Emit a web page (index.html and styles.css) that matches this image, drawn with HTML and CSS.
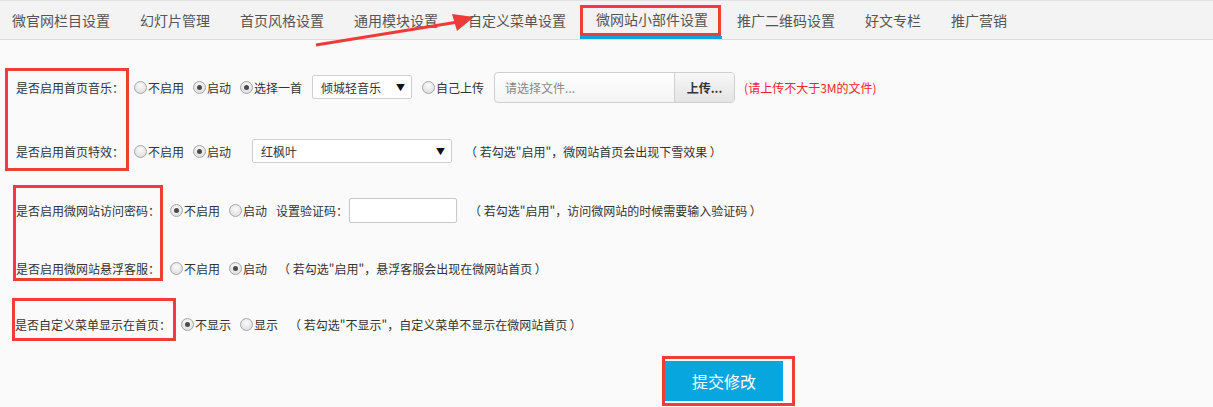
FILE: index.html
```html
<!DOCTYPE html>
<html lang="zh-CN">
<head>
    <meta charset="UTF-8">
    <meta name="viewport" content="width=device-width, initial-scale=1.0">
    <title>微网站小部件设置</title>
    <link rel="stylesheet" href="styles.css">
</head>
<body>

    <!-- top tabs -->
    <div class="tabs">
        <a class="tab">微官网栏目设置</a>
        <a class="tab">幻灯片管理</a>
        <a class="tab">首页风格设置</a>
        <a class="tab">通用模块设置</a>
        <a class="tab">自定义菜单设置</a>
        <a class="tab active">微网站小部件设置<span class="mark mark-tab"></span></a>
        <a class="tab">推广二维码设置</a>
        <a class="tab">好文专栏</a>
        <a class="tab">推广营销</a>
    </div>

    <!-- annotation arrow -->
    <svg class="arrow" width="500" height="60" viewBox="0 0 500 60">
        <line x1="316" y1="45" x2="458" y2="22" stroke="#f03a3a" stroke-width="3"/>
        <polygon points="474,17 452,14 457,31" fill="#f03a3a"/>
    </svg>

    <form class="content">
        <span class="mark mark-1"></span>
        <span class="mark mark-2"></span>
        <span class="mark mark-3"></span>
        <span class="mark mark-4"></span>

        <div class="row">
            <span class="label">是否启用首页音乐：</span>
            <label class="opt"><input type="radio" name="music">不启用</label>
            <label class="opt"><input type="radio" name="music" checked>启动</label>
            <label class="opt"><input type="radio" name="music_src" checked>选择一首</label>
            <div class="select music-select">倾城轻音乐<span class="caret">▼</span></div>
            <label class="opt"><input type="radio" name="music_src">自己上传</label>
            <div class="file-group">
                <span class="file-name">请选择文件...</span>
                <span class="file-btn">上传...</span>
            </div>
            <span class="warn">(请上传不大于3M的文件)</span>
        </div>

        <div class="row row-2">
            <span class="label">是否启用首页特效：</span>
            <label class="opt"><input type="radio" name="effect">不启用</label>
            <label class="opt"><input type="radio" name="effect" checked>启动</label>
            <div class="select effect-select">红枫叶<span class="caret">▼</span></div>
            <span class="note">（ 若勾选"启用"，微网站首页会出现下雪效果 ）</span>
        </div>

        <div class="row row-3">
            <span class="label">是否启用微网站访问密码：</span>
            <label class="opt"><input type="radio" name="pwd" checked>不启用</label>
            <label class="opt"><input type="radio" name="pwd">启动</label>
            <span class="field-label">设置验证码：</span>
            <input type="text" class="code-input">
            <span class="note">（ 若勾选"启用"，访问微网站的时候需要输入验证码 ）</span>
        </div>

        <div class="row row-4">
            <span class="label">是否启用微网站悬浮客服：</span>
            <label class="opt"><input type="radio" name="service">不启用</label>
            <label class="opt"><input type="radio" name="service" checked>启动</label>
            <span class="note note-near">（ 若勾选"启用"，悬浮客服会出现在微网站首页 ）</span>
        </div>

        <div class="row row-5">
            <span class="label label-tight">是否自定义菜单显示在首页：</span>
            <label class="opt"><input type="radio" name="menu" checked>不显示</label>
            <label class="opt"><input type="radio" name="menu">显示</label>
            <span class="note note-near">（ 若勾选"不显示"，自定义菜单不显示在微网站首页 ）</span>
        </div>

        <div class="actions">
            <button type="button" class="submit">提交修改</button>
        </div>
    </form>

</body>
</html>
```

FILE: styles.css
```css
body {
    margin: 0;
    background: #fafafa;
    font-family: "Noto Sans CJK SC", "Microsoft YaHei", sans-serif;
    font-size: 12px;
    color: #333;
    position: relative;
    height: 407px;
    overflow: hidden;
}
.tabs {
    display: flex;
    height: 38px;
    background: #f3f3f3;
    border-top: 1px solid #e2e2e2;
    border-bottom: 1px solid #dcdcdc;
}
.tab {
    position: relative;
    display: flex;
    align-items: center;
    padding: 0 15px;
    font-size: 14px;
    color: #555;
    white-space: nowrap;
}
.tab:first-child {
    padding-left: 12px;
}
.tab.active {
    padding: 0 14px 0 16px;
    margin-left: -1px;
    border-bottom: 3px solid #0aa3dc;
    height: 35px;
}
.arrow {
    position: absolute;
    left: 0;
    top: 0;
    pointer-events: none;
}

/* red annotation boxes */
.mark {
    position: absolute;
    border: 3px solid #f23b3b;
    box-sizing: border-box;
    pointer-events: none;
}
.mark-tab { left: 0; top: 4px; width: 141px; height: 31px; }
.mark-1 { left: 5px; top: 28px; width: 124px; height: 103px; }
.mark-2 { left: 13px; top: 145px; width: 150px; height: 96px; }
.mark-3 { left: 12px; top: 258px; width: 164px; height: 43px; }
.mark-4 { left: 662px; top: 316px; width: 133px; height: 50px; }

.content {
    position: relative;
    padding: 31px 0 0 16px;
}
.row {
    display: flex;
    align-items: center;
    height: 32px;
    white-space: nowrap;
}
.row-2 { margin-top: 32px; }
.row-3 { margin-top: 27px; }
.row-4 { margin-top: 26px; }
.row-5 { margin-top: 24px; }
.label {
    margin-right: 10px;
}
.label-tight {
    margin-left: -1px;
    margin-right: 10px;
}
.opt {
    display: flex;
    align-items: center;
    margin-right: 9px;
}
.opt input {
    appearance: none;
    -webkit-appearance: none;
    width: 13px;
    height: 13px;
    margin: 0 1px 0 0;
    border: 1px solid #a6a6a6;
    border-radius: 50%;
    background: radial-gradient(circle at 50% 35%, #fafafa, #d9d9d9);
    position: relative;
}
.opt input:checked::after {
    content: "";
    position: absolute;
    left: 3px;
    top: 3px;
    width: 5px;
    height: 5px;
    border-radius: 50%;
    background: #4a4a4a;
}
.select {
    display: flex;
    align-items: center;
    justify-content: space-between;
    box-sizing: border-box;
    height: 24px;
    padding: 0 6px 0 8px;
    background: #fff;
    border: 1px solid #d0d0d0;
    border-radius: 2px;
    color: #333;
}
.caret {
    font-size: 9px;
    color: #111;
}
.music-select {
    width: 100px;
    margin: 0 10px 0 1px;
}
.effect-select {
    width: 200px;
    margin: 0 13px 0 12px;
}
.file-group {
    display: flex;
    box-sizing: border-box;
    width: 241px;
    height: 31px;
    margin-left: 1px;
    border: 1px solid #cfcfcf;
    border-radius: 4px;
    overflow: hidden;
    background: linear-gradient(#fff, #f4f4f4);
}
.file-name {
    flex: 1;
    display: flex;
    align-items: center;
    padding-left: 10px;
    color: #888;
}
.file-btn {
    display: flex;
    align-items: center;
    justify-content: center;
    width: 59px;
    border-left: 1px solid #cfcfcf;
    background: linear-gradient(#f7f7f7, #e4e4e4);
    font-weight: bold;
    color: #333;
}
.warn {
    margin-left: 9px;
    color: #f5222d;
}
.note {
    color: #333;
}
.note-near {
    margin-left: 2px;
}
.field-label {
    margin-left: 0;
}
.code-input {
    box-sizing: border-box;
    width: 108px;
    height: 25px;
    margin: 0 12px 0 1px;
    border: 1px solid #c8c8c8;
    border-radius: 2px;
    background: #fff;
}
.actions {
    margin-top: 21px;
    padding-left: 649px;
}
.submit {
    width: 118px;
    height: 40px;
    border: none;
    background: #08a6df;
    color: #fff;
    font-family: inherit;
    font-size: 16px;
    cursor: pointer;
}
```
